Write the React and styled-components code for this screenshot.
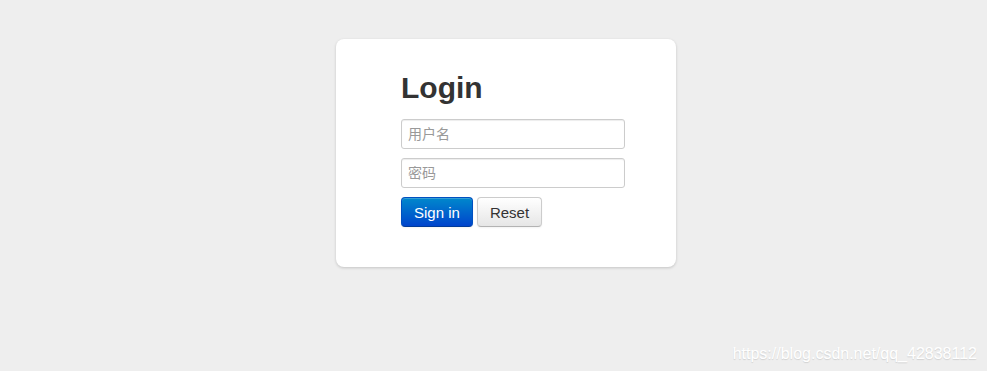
import styled, { createGlobalStyle } from 'styled-components';

const GlobalStyle = createGlobalStyle`
	html, body {
		margin: 0;
		padding: 0;
		background: #eeeeee;
		font-family: "Liberation Sans", "Noto Sans CJK SC", Arial, sans-serif;
	}
`;

const App = () => {
	return (
		<Page>
			<GlobalStyle />
			<Card>
				<Title>Login</Title>
				<Form onSubmit={e => e.preventDefault()}>
					<Field type="text" placeholder="用户名" />
					<Field type="password" placeholder="密码" />
					<Actions>
						<Button type="submit" $primary>
							Sign in
						</Button>
						<Button type="reset">Reset</Button>
					</Actions>
				</Form>
			</Card>
			<Watermark>https://blog.csdn.net/qq_42838112</Watermark>
		</Page>
	);
};

const Page = styled.div`
	position: relative;
	height: 371px;
	display: flex;
	justify-content: center;
	align-items: flex-start;
	padding: 39px 0 0 25px;
	box-sizing: border-box;
	overflow: hidden;
`;

const Card = styled.div`
	width: 340px;
	box-sizing: border-box;
	padding: 29px 65px 40px;
	background: #fff;
	border-radius: 8px;
	box-shadow: 0 1px 3px rgba(0, 0, 0, 0.18);
`;

const Title = styled.h2`
	margin: 0 0 11px;
	font-size: 30px;
	line-height: 40px;
	font-weight: bold;
	color: #333;
`;

const Form = styled.form`
	display: flex;
	flex-direction: column;
	gap: 9px;
`;

const Field = styled.input`
	box-sizing: border-box;
	width: 224px;
	height: 30px;
	padding: 4px 6px;
	border: 1px solid #cccccc;
	border-radius: 3px;
	font-family: inherit;
	font-size: 14px;
	color: #555;
	box-shadow: inset 0 1px 1px rgba(0, 0, 0, 0.075);
	outline: none;

	&::placeholder {
		color: #999;
	}
`;

const Actions = styled.div`
	display: flex;
	gap: 4px;
`;

const Button = styled.button`
	height: 30px;
	padding: 0 12px;
	border-radius: 4px;
	font-family: inherit;
	font-size: 15px;
	cursor: pointer;
	border-width: 1px;
	border-style: solid;
	border-color: ${p => (p.$primary ? '#0050c0 #0050c0 #003a99' : '#cccccc #cccccc #b3b3b3')};
	color: ${p => (p.$primary ? '#fff' : '#333')};
	background: ${p =>
		p.$primary
			? 'linear-gradient(to bottom, #0088cc, #0044cc)'
			: 'linear-gradient(to bottom, #ffffff, #e6e6e6)'};
	box-shadow: inset 0 1px 0 rgba(255, 255, 255, 0.2), 0 1px 2px rgba(0, 0, 0, 0.05);
`;

const Watermark = styled.div`
	position: absolute;
	right: 10px;
	bottom: 8px;
	font-size: 16px;
	color: #ffffff;
	text-shadow: 0 1px 1px rgba(0, 0, 0, 0.12);
`;

export default App;
